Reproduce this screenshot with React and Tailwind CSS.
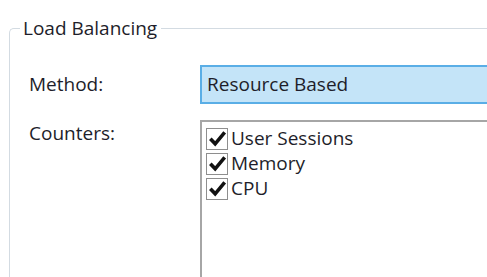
import React from "react";

function Check({ label }) {
  return (
    <div className="flex items-center h-[25px]">
      <div className="w-[22px] h-[22px] border border-[#8e8e8e] bg-white flex items-center justify-center shrink-0">
        <svg width="19" height="19" viewBox="0 0 18 18">
          <path d="M2.2 9.2 L6.8 14 L15.8 3.2" fill="none" stroke="#111" strokeWidth="3.4" strokeLinejoin="miter" />
        </svg>
      </div>
      <span className="ml-[3px] leading-none text-[#1e1e2a]">{label}</span>
    </div>
  );
}

export default function App() {
  return (
    <div
      className="w-[487px] h-[277px] bg-white overflow-hidden text-[19px]"
      style={{ fontFamily: '"Open Sans", "Noto Sans", sans-serif' }}
    >
      <fieldset className="ml-[9px] mt-[16px] w-[500px] h-[300px] border-t border-l border-[#d3dbe2] rounded-tl-[5px]">
        <legend className="ml-[10px] pl-[3px] pr-[4px] leading-[24px] text-[#1e1e2a]">Load Balancing</legend>
        <div className="grid grid-cols-[190px_1fr] mt-[25px]">
          <div className="pl-[19px] pt-[6px] leading-[26px] text-[#1e1e2a]">Method:</div>
          <div className="h-[39px] border-2 border-r-0 border-[#5aaee6] bg-[#c4e4f8] flex items-center pl-[5px] text-[#1e1e2a]">
            Resource Based
          </div>
          <div className="pl-[19px] leading-[26px] text-[#1e1e2a] mt-[16px]">Counters:</div>
          <div className="mt-[16px] h-[200px] border-t-2 border-l-2 border-[#a6a6a6] pl-[4px] pt-[4px]">
            <Check label="User Sessions" />
            <Check label="Memory" />
            <Check label="CPU" />
          </div>
        </div>
      </fieldset>
    </div>
  );
}
